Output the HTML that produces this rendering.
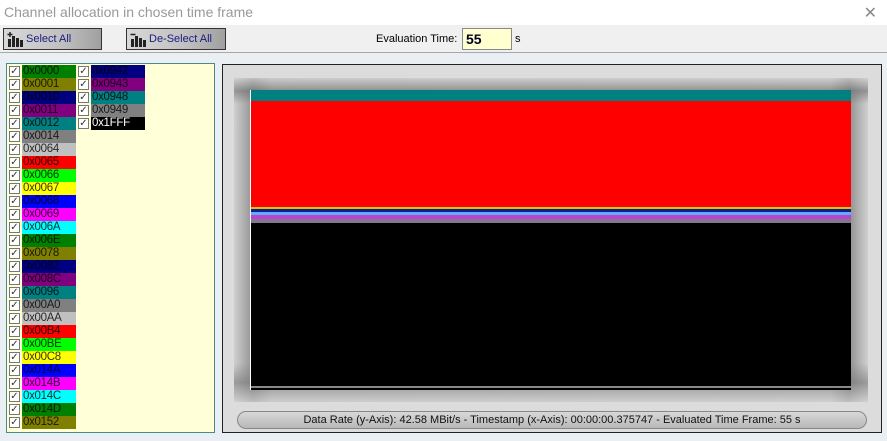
<!DOCTYPE html>
<html><head><style>
*{margin:0;padding:0;box-sizing:border-box}
body{width:887px;height:441px;background:#e9eff3;font-family:"Liberation Sans",sans-serif;position:relative;overflow:hidden}
.title{position:absolute;left:0;top:0;width:887px;height:25px;background:#fff;color:#999;font-size:14px;padding:4px 0 0 4px}
.x{position:absolute;right:10px;top:3px;color:#888;font-size:16px}
.tb{position:absolute;left:0;top:25px;width:887px;height:28px;background:#f0f0f0;border-bottom:1px solid #a8a8a8}
.btn{position:absolute;top:3px;height:22px;border:1px solid #333;background:linear-gradient(90deg,#d8d8d8,#c0c0c0 60%,#a0a0a0);color:#1a1a80;font-size:11px;padding:4px 0 0 22px}
.ic{position:absolute;left:3px;top:3px;width:16px;height:15px}
.lbl{position:absolute;left:376px;top:8px;font-size:11px;color:#000}
.ev{position:absolute;left:462px;top:28px;width:50px;height:22px;background:#ffffd0;border:1px solid #888;font-weight:bold;font-size:14px;padding:2px 0 0 3px;color:#002}
.list{position:absolute;left:6px;top:63px;width:209px;height:370px;background:#ffffd8;border:1px solid #4a8a8a}
.row{position:absolute;height:13px;font-size:11.5px;line-height:13px}
.cb{position:absolute;left:0;top:1px;width:11px;height:11px;border:1px solid #777;background:#fff;font-size:10px;line-height:9px;color:#333;text-align:center}
.tx{position:absolute;left:13px;top:0;width:54px;height:13px;color:rgba(0,0,0,.8);padding-left:1px;letter-spacing:-.3px}
.rp{position:absolute;left:222px;top:64px;width:660px;height:369px;background:#dcdcdc;border:1px solid #222}
.frame{position:absolute;left:11px;top:13px;width:634px;height:324px;background:linear-gradient(90deg,#d0d0d0,#909090 3%,#c0c0c0 6%,#c8c8c8 94%,#909090 97%,#d0d0d0);}
.frame2{position:absolute;left:0;top:0;width:634px;height:324px;background:linear-gradient(180deg,rgba(210,210,210,.7),rgba(110,110,110,.6) 4%,rgba(0,0,0,0) 8%,rgba(0,0,0,0) 88%,rgba(120,120,120,.6) 94%,rgba(210,210,210,.7))}
.plot{position:absolute;left:16px;top:12px;width:601px;height:300px;background:#000;border-left:1px solid #fff}
.status{position:absolute;left:14px;top:346px;width:630px;height:18px;background:linear-gradient(#d8d8d8,#b8b8b8);border:1px solid #888;border-radius:9px/9px;font-size:11px;text-align:center;line-height:16px;color:#111}
</style></head><body>
<div class="title">Channel allocation in chosen time frame<span class="x">✕</span></div>
<div class="tb">
<div class="btn" style="left:3px;width:99px"><svg class="ic" viewBox="0 0 16 15"><rect x="1" y="7" width="3" height="8" fill="#222"/><rect x="5" y="4" width="3" height="11" fill="#222"/><rect x="9" y="6" width="3" height="9" fill="#222"/><rect x="13" y="8" width="3" height="7" fill="#222"/><path d="M3 0v5M0.5 2.5h5" stroke="#222" stroke-width="1.5"/></svg>Select All</div>
<div class="btn" style="left:126px;width:100px"><svg class="ic" viewBox="0 0 16 15"><rect x="1" y="7" width="3" height="8" fill="#222"/><rect x="5" y="4" width="3" height="11" fill="#222"/><rect x="9" y="6" width="3" height="9" fill="#222"/><rect x="13" y="8" width="3" height="7" fill="#222"/><path d="M0.5 2.5h5" stroke="#222" stroke-width="1.5"/></svg>De-Select All</div>
<div class="lbl">Evaluation Time:</div>
<div class="lbl" style="left:515px">s</div>
</div>
<div class="ev">55</div>
<div class="list" id="l"></div>
<div class="rp">
<div class="frame"><div class="frame2"></div>
<div class="plot">
<div style="position:absolute;left:0;top:0;width:600px;height:11px;background:#008080"></div>
<div style="position:absolute;left:0;top:11px;width:600px;height:106px;background:#f00"></div>
<div style="position:absolute;left:0;top:117px;width:600px;height:2px;background:#cc0"></div>
<div style="position:absolute;left:0;top:119px;width:600px;height:3px;background:#1a1a90"></div>
<div style="position:absolute;left:0;top:122px;width:600px;height:3px;background:#58b0ff"></div>
<div style="position:absolute;left:0;top:125px;width:600px;height:4px;background:#c040d0"></div>
<div style="position:absolute;left:0;top:129px;width:600px;height:4px;background:#807890"></div>
<div style="position:absolute;left:0;top:296px;width:600px;height:2px;background:#888"></div>
</div></div>
<div class="status">Data Rate (y-Axis): 42.58 MBit/s - Timestamp (x-Axis): 00:00:00.375747 - Evaluated Time Frame: 55 s</div>
</div>
<script>
var c1=[["0x0000","#008000"],["0x0001","#808000"],["0x0010","#000080"],["0x0011","#800080"],["0x0012","#008080"],["0x0014","#808080"],["0x0064","#c0c0c0"],["0x0065","#ff0000"],["0x0066","#00ff00"],["0x0067","#ffff00"],["0x0068","#0000ff"],["0x0069","#ff00ff"],["0x006A","#00ffff"],["0x006E","#008000"],["0x0078","#808000"],["0x0082","#000080"],["0x008C","#800080"],["0x0096","#008080"],["0x00A0","#808080"],["0x00AA","#c0c0c0"],["0x00B4","#ff0000"],["0x00BE","#00ff00"],["0x00C8","#ffff00"],["0x014A","#0000ff"],["0x014B","#ff00ff"],["0x014C","#00ffff"],["0x014D","#008000"],["0x0152","#808000"]];
var c2=[["0x0942","#000080"],["0x0943","#800080"],["0x0948","#008080"],["0x0949","#808080"],["0x1FFF","#000000"]];
var h="";
function add(a,x){a.forEach(function(r,i){var fg=r[1]=="#000000"?"color:#fff;":"";h+='<div class="row" style="left:'+x+'px;top:'+(1+i*13)+'px;width:70px"><div class="cb">✓</div><div class="tx" style="background:'+r[1]+';'+fg+'">'+r[0]+'</div></div>';});}
add(c1,2);add(c2,71);
document.getElementById("l").innerHTML=h;
</script>
</body></html>
